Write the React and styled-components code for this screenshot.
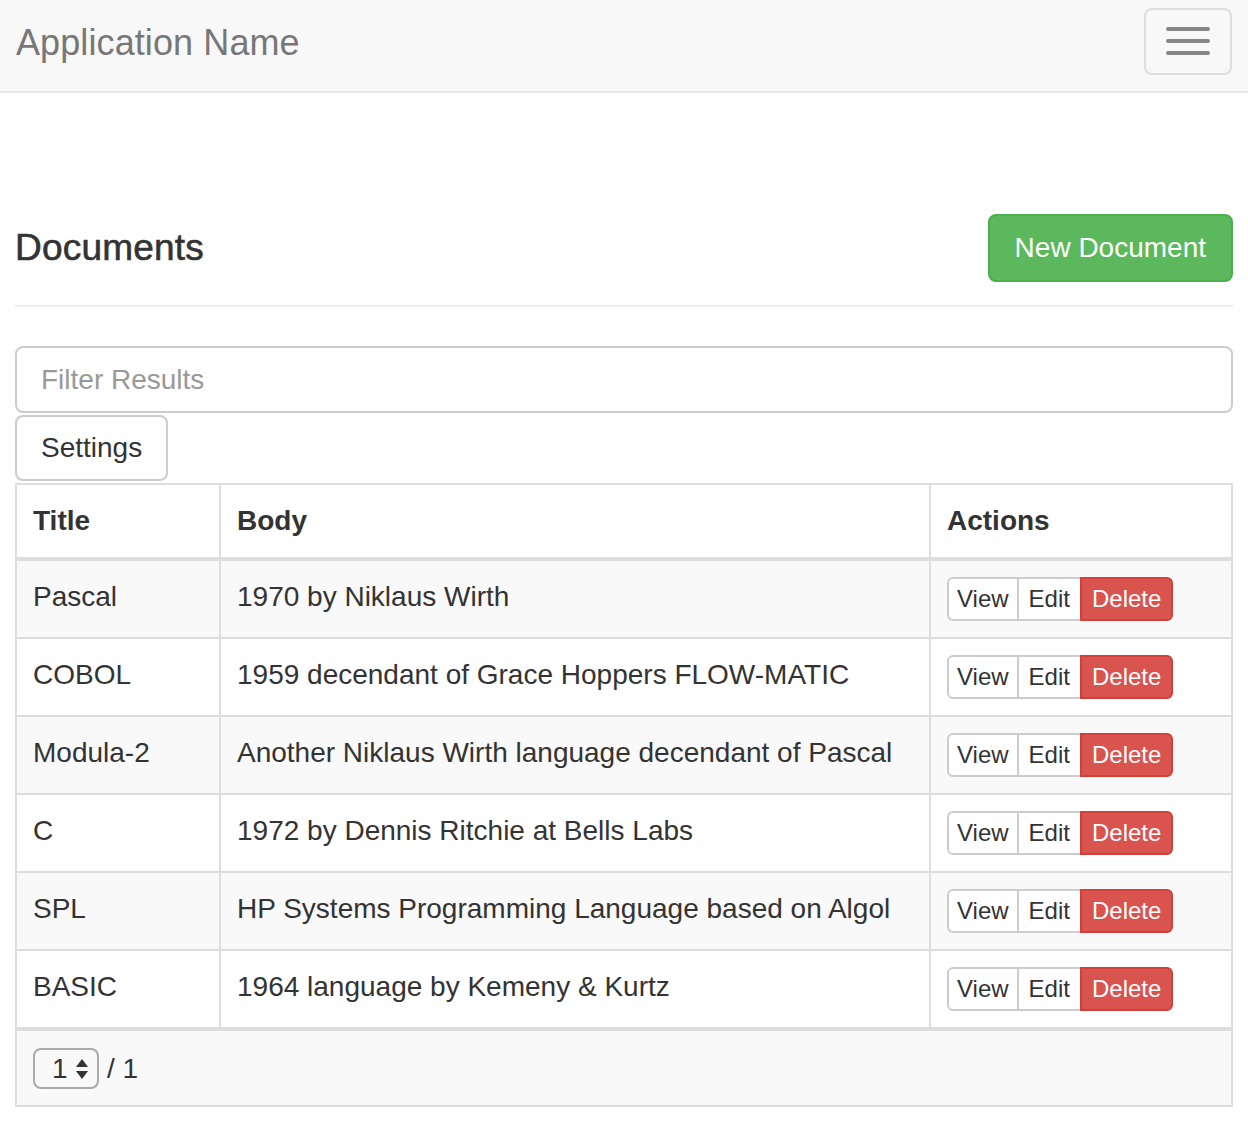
import React from 'react'
import styled, { createGlobalStyle } from 'styled-components'

const GlobalStyle = createGlobalStyle`
  * { box-sizing: border-box; }
  html, body {
    margin: 0;
    padding: 0;
    background: #fff;
    color: #333;
    font-family: "Liberation Sans", Arial, sans-serif;
    font-size: 28px;
    line-height: 40px;
  }
`

const Navbar = styled.nav`
  display: flex;
  align-items: center;
  justify-content: space-between;
  height: 93px;
  padding: 0 16px 0 16px;
  background: #f8f8f8;
  border-bottom: 2px solid #e7e7e7;
`

const Brand = styled.a`
  font-size: 36px;
  line-height: 40px;
  color: #777;
  text-decoration: none;
  margin-top: -6px;
  letter-spacing: 0.1px;
`

const Toggle = styled.button`
  display: flex;
  flex-direction: column;
  align-items: center;
  justify-content: center;
  gap: 8px;
  width: 88px;
  height: 67px;
  margin-top: -9px;
  padding: 0;
  background: transparent;
  border: 2px solid #ddd;
  border-radius: 8px;
`

const IconBar = styled.span`
  display: block;
  width: 44px;
  height: 4px;
  border-radius: 2px;
  background: #888;
`

const Main = styled.main`
  padding: 0 15px 18px;
`

const PageHeader = styled.div`
  display: flex;
  align-items: center;
  justify-content: space-between;
  margin-top: 121px;
  padding-bottom: 23px;
  border-bottom: 2px solid #eee;
`

const Heading = styled.h1`
  margin: 0;
  font-size: 37px;
  font-weight: 400;
  line-height: 44px;
  color: #333;
  letter-spacing: 0.2px;
  -webkit-text-stroke: 0.6px #333;
`

const Button = styled.button`
  font-family: inherit;
  font-size: 28px;
  line-height: 40px;
  padding: 12px 25px;
  border: 2px solid ${p => (p.$variant === 'success' ? '#4cae4c' : '#ccc')};
  background: ${p => (p.$variant === 'success' ? '#5cb85c' : '#fff')};
  color: ${p => (p.$variant === 'success' ? '#fff' : '#333')};
  border-radius: 8px;
  cursor: pointer;
`

const FilterInput = styled.input`
  display: block;
  width: 100%;
  height: 67px;
  margin-top: 39px;
  padding: 0 24px;
  font-family: inherit;
  font-size: 28px;
  color: #555;
  border: 2px solid #ccc;
  border-radius: 8px;
  outline: none;
  &::placeholder { color: #999; }
`

const SettingsButton = styled(Button)`
  display: block;
  margin-top: 2px;
  height: 66px;
  padding: 0 24px;
`

const Table = styled.table`
  width: 100%;
  margin-top: 2px;
  border-collapse: separate;
  border-spacing: 0;
  table-layout: fixed;
  border: 2px solid #ddd;
`

const Th = styled.th`
  text-align: left;
  font-weight: 700;
  padding: 16px;
  vertical-align: bottom;
  border-left: 2px solid #ddd;
  &:first-child { border-left: 0; }
`

const Row = styled.tr`
  background: ${p => (p.$striped ? '#f9f9f9' : '#fff')};
`

const Td = styled.td`
  padding: 16px;
  vertical-align: top;
  white-space: nowrap;
  border-top: ${p => (p.$first ? 4 : 2)}px solid #ddd;
  border-left: 2px solid #ddd;
  &:first-child { border-left: 0; }
`

const FooterCell = styled.td`
  padding: 16px;
  background: #f9f9f9;
  border-top: 4px solid #ddd;
`

const BtnGroup = styled.div`
  display: inline-flex;
`

const SmallButton = styled.button`
  font-family: inherit;
  font-size: 24px;
  line-height: 36px;
  padding: 2px ${p => (p.$tight ? 8 : 10)}px;
  margin-left: -2px;
  border: 2px solid ${p => (p.$danger ? '#d43f3a' : '#ccc')};
  background: ${p => (p.$danger ? '#d9534f' : '#fff')};
  color: ${p => (p.$danger ? '#fff' : '#333')};
  border-radius: 0;
  position: relative;
  z-index: ${p => (p.$danger ? 1 : 0)};
  &:first-child { margin-left: 0; border-radius: 6px 0 0 6px; }
  &:last-child { border-radius: 0 6px 6px 0; }
`

const Pager = styled.div`
  display: flex;
  align-items: center;
  gap: 8px;
  padding-top: 1px;
`

const PageBox = styled.div`
  display: flex;
  align-items: center;
  justify-content: space-between;
  width: 66px;
  height: 41px;
  padding: 0 8px 0 17px;
  border: 2px solid #aaa;
  border-radius: 8px;
  font-size: 28px;
`

const Spinner = () => (
  <svg width="14" height="22" viewBox="0 0 14 22">
    <path d="M7 1 L13 9 L1 9 Z" fill="#333" />
    <path d="M1 13 L13 13 L7 21 Z" fill="#333" />
  </svg>
)

const docs = [
  ['Pascal', '1970 by Niklaus Wirth'],
  ['COBOL', '1959 decendant of Grace Hoppers FLOW-MATIC'],
  ['Modula-2', 'Another Niklaus Wirth language decendant of Pascal'],
  ['C', '1972 by Dennis Ritchie at Bells Labs'],
  ['SPL', 'HP Systems Programming Language based on Algol'],
  ['BASIC', '1964 language by Kemeny & Kurtz'],
]

const App = () => {
  return (
    <>
      <GlobalStyle />
      <Navbar>
        <Brand href="#">Application Name</Brand>
        <Toggle aria-label="Toggle navigation">
          <IconBar />
          <IconBar />
          <IconBar />
        </Toggle>
      </Navbar>
      <Main>
        <PageHeader>
          <Heading>Documents</Heading>
          <Button $variant="success">New Document</Button>
        </PageHeader>
        <FilterInput placeholder="Filter Results" />
        <SettingsButton>Settings</SettingsButton>
        <Table>
          <colgroup>
            <col style={{ width: 202 }} />
            <col style={{ width: 710 }} />
            <col />
          </colgroup>
          <thead>
            <tr>
              <Th>Title</Th>
              <Th>Body</Th>
              <Th>Actions</Th>
            </tr>
          </thead>
          <tbody>
            {docs.map(([title, body], i) => (
              <Row key={title} $striped={i % 2 === 0}>
                <Td $first={i === 0}>{title}</Td>
                <Td $first={i === 0}>{body}</Td>
                <Td $first={i === 0}>
                  <BtnGroup>
                    <SmallButton $tight>View</SmallButton>
                    <SmallButton>Edit</SmallButton>
                    <SmallButton $danger>Delete</SmallButton>
                  </BtnGroup>
                </Td>
              </Row>
            ))}
          </tbody>
          <tfoot>
            <tr>
              <FooterCell colSpan={3}>
                <Pager>
                  <PageBox>
                    <span>1</span>
                    <Spinner />
                  </PageBox>
                  <span>/ 1</span>
                </Pager>
              </FooterCell>
            </tr>
          </tfoot>
        </Table>
      </Main>
    </>
  )
}

export default App
